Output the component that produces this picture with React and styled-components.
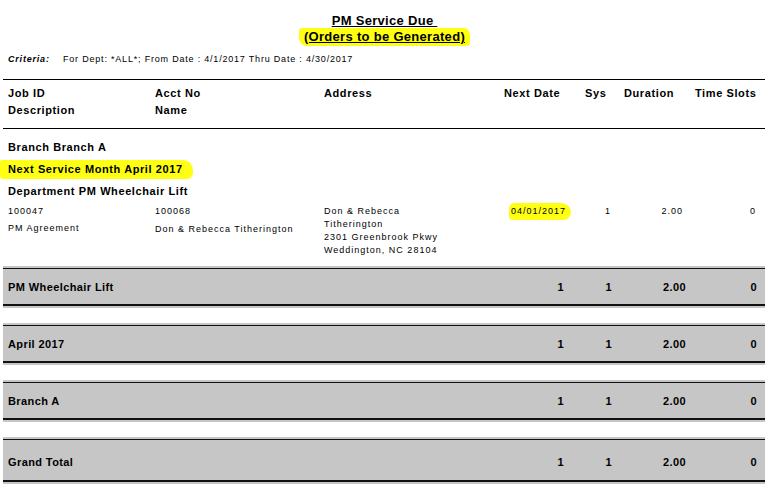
import React from 'react'
import styled, { createGlobalStyle } from 'styled-components'

const Global = createGlobalStyle`
  html, body {
    margin: 0;
    padding: 0;
    background: #FFFFFF;
  }
  body {
    font-family: 'Liberation Sans', Arial, sans-serif;
    color: #000000;
  }
`

const Page = styled.div`
  width: 767px;
  height: 488px;
  overflow: hidden;
  box-sizing: border-box;
  padding-top: 13px;
`

const Narrow = `
  font-family: 'Liberation Sans Narrow', 'Arial Narrow', 'Liberation Sans', sans-serif;
  font-weight: bold;
`

const TitleBlock = styled.div`
  display: flex;
  flex-direction: column;
  align-items: center;
  ${Narrow}
  font-size: 13px;
  letter-spacing: 0.3px;
`

const TitleLine = styled.div`
  height: 16px;
  line-height: 16px;
  text-decoration: underline;
  padding-left: 2px;
`

const Marker = styled.span`
  background: #FFFF14;
  border-radius: ${p => p.$radius || '3px 6px 4px 8px'};
  padding: ${p => p.$pad || '1px 5px 2px 5px'};
`

const Criteria = styled.div`
  display: flex;
  padding-left: 8px;
  margin-top: 8px;
  height: 12px;
  line-height: 12px;
  font-size: 9px;
  ${Narrow}
  font-weight: normal;
  letter-spacing: 0.8px;
`

const CriteriaLabel = styled.span`
  width: 55px;
  font-style: italic;
  font-weight: bold;
`

const HeaderRule = styled.div`
  margin: ${p => p.$top || 0}px 2px 0 3px;
  border-top: 1px solid #000000;
  height: 0;
`

const Header = styled.div`
  display: grid;
  grid-template-columns: 147px 169px 180px 81px 39px 71px auto;
  padding: 5px 0 9px 8px;
  ${Narrow}
  font-size: 11px;
  letter-spacing: 0.6px;
  line-height: 17px;
`

const Group = styled.div`
  padding: 7px 0 0 8px;
  font-size: 11px;
  font-weight: bold;
  letter-spacing: 0.6px;
  line-height: 22px;
`

const GroupLine = styled.div`
  height: 22px;
  margin-left: ${p => p.$pull || 0}px;
`

const DetailRow = styled.div`
  display: grid;
  grid-template-columns: 147px 169px 180px 76px 31px 72px 73px;
  padding: 3px 0 0 8px;
  height: 61px;
  font-size: 9px;
  letter-spacing: 1px;
  line-height: 13px;
`

const Cell = styled.div`
  text-align: ${p => (p.$right ? 'right' : 'left')};
  padding-left: ${p => p.$indent || 0}px;
`

const Second = styled.div`
  margin-top: ${p => p.$gap || 4}px;
`

const Totals = styled.div`
  display: flex;
  flex-direction: column;
  gap: 15px;
`

const Band = styled.div`
  margin: 0 2px 0 3px;
  padding: 2px 0 2px;
  background: #C6C6C6;
`

const BandInner = styled.div`
  display: grid;
  grid-template-columns: 1fr 40px 48px 74px 71px;
  align-items: center;
  box-sizing: border-box;
  height: ${p => (p.$tall ? 43 : 38)}px;
  padding: ${p => (p.$tall ? '3px' : '0')} 8px 0 5px;
  border-top: 1px solid #111111;
  border-bottom: 2px solid #111111;
  ${Narrow}
  font-size: 11px;
  letter-spacing: 0.4px;
`

const Num = styled.div`
  text-align: right;
`

const bands = [
  { label: 'PM Wheelchair Lift' },
  { label: 'April 2017' },
  { label: 'Branch A' },
  { label: 'Grand Total', tall: true },
]

export default function App() {
  return (
    <Page>
      <Global />
      <TitleBlock>
        <TitleLine>PM Service Due&nbsp;</TitleLine>
        <TitleLine><Marker>(Orders to be Generated)</Marker></TitleLine>
      </TitleBlock>
      <Criteria>
        <CriteriaLabel>Criteria:</CriteriaLabel>
        <span>For Dept: *ALL*; From Date : 4/1/2017 Thru Date : 4/30/2017</span>
      </Criteria>
      <HeaderRule $top={14} />
      <Header>
        <div>Job ID<br />Description</div>
        <div>Acct No<br />Name</div>
        <div>Address</div>
        <div>Next Date</div>
        <div>Sys</div>
        <div>Duration</div>
        <div>Time Slots</div>
      </Header>
      <HeaderRule />
      <Group>
        <GroupLine>Branch Branch A</GroupLine>
        <GroupLine $pull={-8}>
          <Marker $pad="3px 10px 4px 8px" $radius="2px 10px 6px 3px">Next Service Month April 2017</Marker>
        </GroupLine>
        <GroupLine>Department PM Wheelchair Lift</GroupLine>
      </Group>
      <DetailRow>
        <Cell>100047<Second>PM Agreement</Second></Cell>
        <Cell>100068<Second $gap={5}>Don &amp; Rebecca Titherington</Second></Cell>
        <Cell>Don &amp; Rebecca<br />Titherington<br />2301 Greenbrook Pkwy<br />Weddington, NC 28104</Cell>
        <Cell $indent={5}><Marker $pad="3px 5px 4px 2px" $radius="6px 10px 8px 4px">04/01/2017</Marker></Cell>
        <Cell $right>1</Cell>
        <Cell $right>2.00</Cell>
        <Cell $right>0</Cell>
      </DetailRow>
      <Totals>
        {bands.map(b => (
          <Band key={b.label}>
            <BandInner $tall={b.tall}>
              <div>{b.label}</div>
              <Num>1</Num>
              <Num>1</Num>
              <Num>2.00</Num>
              <Num>0</Num>
            </BandInner>
          </Band>
        ))}
      </Totals>
    </Page>
  )
}
